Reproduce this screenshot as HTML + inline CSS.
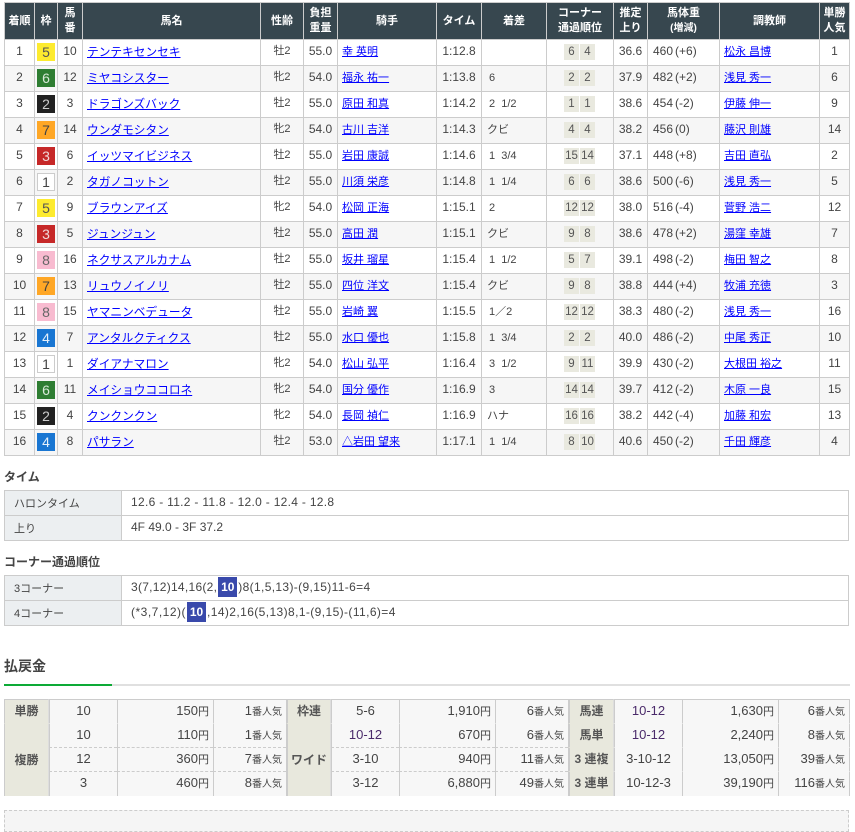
<!DOCTYPE html>
<html lang="ja"><head><meta charset="utf-8"><title>レース結果</title>
<style>
html,body{margin:0;padding:0;background:#fff}
body{width:855px;height:816px;overflow:hidden;position:relative;font:12px/16px "Liberation Sans","Noto Sans CJK JP",sans-serif;color:#444}
a{color:#00f;text-decoration:underline}
table{border-collapse:collapse;table-layout:fixed;position:absolute}
#r{left:4px;top:2px;width:845px}
#r th{background:#37474f;color:#fff;font-weight:bold;font-size:11px;line-height:15px;border:1px solid #ccc;padding:0;height:36px;text-align:center}
#r td{border:1px solid #ccc;padding:0;height:25px;text-align:center;white-space:nowrap;overflow:hidden;line-height:22px;vertical-align:top}
#r td:nth-child(5){font-size:11px}
#r tr:nth-child(even) td{background:#f6f6f6}
#r td.l{text-align:left;padding-left:4px;font-size:11.7px;line-height:25px}
#r td.j{text-align:left;padding-left:4px;font-size:11px;line-height:24px}
#r td.d{text-align:left;padding-left:7px;font-size:11px;line-height:24px}
#r td.k{text-align:left;padding-left:5px;font-size:11px;line-height:24px}
#r td.w{text-align:left;padding-left:5px}
.w i{font-style:normal;margin-left:2px}
.b{display:block;width:18px;height:18px;margin:3px auto 0;font:14px/18px "Liberation Sans",sans-serif;text-align:center;box-sizing:border-box}
.w1{background:#fff;border:1px solid #ccc;line-height:16px;color:#444}
.w2{background:#212121;color:#ccc}.w3{background:#c62828;color:#f0d8d8}.w4{background:#1976d2;color:#e6f0fa}
.w5{background:#fdeb2f;color:#555}.w6{background:#2e7d32;color:#d8e8d8}.w7{background:#ffa726;color:#444}.w8{background:#f8bbd0;color:#666}
#r td.o{text-align:left;padding-left:17px}
.c{display:inline-block;width:15px;height:16px;background:#e9e9df;font-size:11.5px;line-height:16px;margin:4px 1px 0 0;vertical-align:top;text-align:center;color:#555}
h4{position:absolute;left:4px;margin:0;font-size:12px;line-height:16px;font-weight:bold;color:#444}
.s{left:4px;width:845px}
.s td{border:1px solid #ccc;height:23px;padding:0 0 1px 9px;box-sizing:content-box;line-height:21px;white-space:nowrap;overflow:visible}
.s td:first-child{background:#eceff1;font-size:11px;line-height:21px;height:22px;padding:2px 0 0 9px}
.n{display:inline-block;width:19px;height:20px;background:#3949ab;color:#fff;font-weight:bold;text-align:center;line-height:20px;vertical-align:top;margin:0 1px -1px 1px;letter-spacing:0}
h3{position:absolute;left:4px;top:657px;margin:0;font-size:14px;line-height:18px;font-weight:bold;color:#444}
#gl{position:absolute;left:4px;top:684px;width:846px;height:2px;background:#e0e0e0}
#gl div{width:108px;height:2px;background:#0daa36}
#p{left:4px;top:699px;width:846px;border-collapse:separate;border-spacing:0;font-size:13px}
#p td{padding:0 4px;height:24px;box-sizing:border-box;background:#f7f7f7;text-align:center;white-space:nowrap;border-left:1px solid #ccc;border-top:1px solid transparent;line-height:22px;vertical-align:top;overflow:hidden}
#p tr:first-child td{border-top-color:#ccc}
#p tr:last-child td{height:25px}
#p td.h{background:#e8e8dd;font-weight:bold;font-size:12px;border-left:2px solid #ccc;border-right:1px solid #ddd;padding:0;color:#555}
#p td.h.m{vertical-align:middle;height:73px}
#p td.f{border-left-width:1px}
#p td.r{text-align:right}
#p small{font-size:10px;line-height:1}
#p small.y{font-size:11px}
#p tr.da td:not(.h){border-top:1px dashed #ccc}
#p tr.nd td:nth-last-child(-n+3){border-top-color:transparent}
#p td:last-child{border-right:1px solid #ccc}
.pu{color:#4a2a6a}
#box{position:absolute;left:4px;top:810px;width:843px;height:20px;background:#f5f5f5;border:1px dashed #ccc}
</style></head><body>
<table id="r">
<colgroup><col style="width:30px"><col style="width:23px"><col style="width:25px"><col style="width:178px"><col style="width:43px"><col style="width:34px"><col style="width:99px"><col style="width:45px"><col style="width:65px"><col style="width:67px"><col style="width:34px"><col style="width:72px"><col style="width:100px"><col style="width:30px"></colgroup>
<thead><tr><th>着順</th><th>枠</th><th>馬<br>番</th><th>馬名</th><th>性齢</th><th>負担<br>重量</th><th>騎手</th><th>タイム</th><th>着差</th><th>コーナー<br>通過順位</th><th>推定<br>上り</th><th>馬体重<br><span style="font-size:10px">(増減)</span></th><th>調教師</th><th>単勝<br>人気</th></tr></thead>
<tbody>
<tr><td>1</td><td><span class="b w5">5</span></td><td>10</td><td class="l"><a href="#">テンテキセンセキ</a></td><td>牡2</td><td>55.0</td><td class="j"><a href="#">幸 英明</a></td><td>1:12.8</td><td class="d"></td><td class="o"><span class="c">6</span><span class="c">4</span></td><td>36.6</td><td class="w">460<i>(+6)</i></td><td class="j"><a href="#">松永 昌博</a></td><td>1</td></tr>
<tr><td>2</td><td><span class="b w6">6</span></td><td>12</td><td class="l"><a href="#">ミヤコシスター</a></td><td>牝2</td><td>54.0</td><td class="j"><a href="#">福永 祐一</a></td><td>1:13.8</td><td class="d">6</td><td class="o"><span class="c">2</span><span class="c">2</span></td><td>37.9</td><td class="w">482<i>(+2)</i></td><td class="j"><a href="#">浅見 秀一</a></td><td>6</td></tr>
<tr><td>3</td><td><span class="b w2">2</span></td><td>3</td><td class="l"><a href="#">ドラゴンズバック</a></td><td>牡2</td><td>55.0</td><td class="j"><a href="#">原田 和真</a></td><td>1:14.2</td><td class="d">2&nbsp; 1/2</td><td class="o"><span class="c">1</span><span class="c">1</span></td><td>38.6</td><td class="w">454<i>(-2)</i></td><td class="j"><a href="#">伊藤 伸一</a></td><td>9</td></tr>
<tr><td>4</td><td><span class="b w7">7</span></td><td>14</td><td class="l"><a href="#">ウンダモシタン</a></td><td>牝2</td><td>54.0</td><td class="j"><a href="#">古川 吉洋</a></td><td>1:14.3</td><td class="k">クビ</td><td class="o"><span class="c">4</span><span class="c">4</span></td><td>38.2</td><td class="w">456<i>(0)</i></td><td class="j"><a href="#">藤沢 則雄</a></td><td>14</td></tr>
<tr><td>5</td><td><span class="b w3">3</span></td><td>6</td><td class="l"><a href="#">イッツマイビジネス</a></td><td>牡2</td><td>55.0</td><td class="j"><a href="#">岩田 康誠</a></td><td>1:14.6</td><td class="d">1&nbsp; 3/4</td><td class="o"><span class="c">15</span><span class="c">14</span></td><td>37.1</td><td class="w">448<i>(+8)</i></td><td class="j"><a href="#">吉田 直弘</a></td><td>2</td></tr>
<tr><td>6</td><td><span class="b w1">1</span></td><td>2</td><td class="l"><a href="#">タガノコットン</a></td><td>牡2</td><td>55.0</td><td class="j"><a href="#">川須 栄彦</a></td><td>1:14.8</td><td class="d">1&nbsp; 1/4</td><td class="o"><span class="c">6</span><span class="c">6</span></td><td>38.6</td><td class="w">500<i>(-6)</i></td><td class="j"><a href="#">浅見 秀一</a></td><td>5</td></tr>
<tr><td>7</td><td><span class="b w5">5</span></td><td>9</td><td class="l"><a href="#">ブラウンアイズ</a></td><td>牝2</td><td>54.0</td><td class="j"><a href="#">松岡 正海</a></td><td>1:15.1</td><td class="d">2</td><td class="o"><span class="c">12</span><span class="c">12</span></td><td>38.0</td><td class="w">516<i>(-4)</i></td><td class="j"><a href="#">菅野 浩二</a></td><td>12</td></tr>
<tr><td>8</td><td><span class="b w3">3</span></td><td>5</td><td class="l"><a href="#">ジュンジュン</a></td><td>牡2</td><td>55.0</td><td class="j"><a href="#">高田 潤</a></td><td>1:15.1</td><td class="k">クビ</td><td class="o"><span class="c">9</span><span class="c">8</span></td><td>38.6</td><td class="w">478<i>(+2)</i></td><td class="j"><a href="#">湯窪 幸雄</a></td><td>7</td></tr>
<tr><td>9</td><td><span class="b w8">8</span></td><td>16</td><td class="l"><a href="#">ネクサスアルカナム</a></td><td>牡2</td><td>55.0</td><td class="j"><a href="#">坂井 瑠星</a></td><td>1:15.4</td><td class="d">1&nbsp; 1/2</td><td class="o"><span class="c">5</span><span class="c">7</span></td><td>39.1</td><td class="w">498<i>(-2)</i></td><td class="j"><a href="#">梅田 智之</a></td><td>8</td></tr>
<tr><td>10</td><td><span class="b w7">7</span></td><td>13</td><td class="l"><a href="#">リュウノイノリ</a></td><td>牡2</td><td>55.0</td><td class="j"><a href="#">四位 洋文</a></td><td>1:15.4</td><td class="k">クビ</td><td class="o"><span class="c">9</span><span class="c">8</span></td><td>38.8</td><td class="w">444<i>(+4)</i></td><td class="j"><a href="#">牧浦 充徳</a></td><td>3</td></tr>
<tr><td>11</td><td><span class="b w8">8</span></td><td>15</td><td class="l"><a href="#">ヤマニンベデュータ</a></td><td>牡2</td><td>55.0</td><td class="j"><a href="#">岩崎 翼</a></td><td>1:15.5</td><td class="d">1／2</td><td class="o"><span class="c">12</span><span class="c">12</span></td><td>38.3</td><td class="w">480<i>(-2)</i></td><td class="j"><a href="#">浅見 秀一</a></td><td>16</td></tr>
<tr><td>12</td><td><span class="b w4">4</span></td><td>7</td><td class="l"><a href="#">アンタルクティクス</a></td><td>牡2</td><td>55.0</td><td class="j"><a href="#">水口 優也</a></td><td>1:15.8</td><td class="d">1&nbsp; 3/4</td><td class="o"><span class="c">2</span><span class="c">2</span></td><td>40.0</td><td class="w">486<i>(-2)</i></td><td class="j"><a href="#">中尾 秀正</a></td><td>10</td></tr>
<tr><td>13</td><td><span class="b w1">1</span></td><td>1</td><td class="l"><a href="#">ダイアナマロン</a></td><td>牝2</td><td>54.0</td><td class="j"><a href="#">松山 弘平</a></td><td>1:16.4</td><td class="d">3&nbsp; 1/2</td><td class="o"><span class="c">9</span><span class="c">11</span></td><td>39.9</td><td class="w">430<i>(-2)</i></td><td class="j"><a href="#">大根田 裕之</a></td><td>11</td></tr>
<tr><td>14</td><td><span class="b w6">6</span></td><td>11</td><td class="l"><a href="#">メイショウココロネ</a></td><td>牝2</td><td>54.0</td><td class="j"><a href="#">国分 優作</a></td><td>1:16.9</td><td class="d">3</td><td class="o"><span class="c">14</span><span class="c">14</span></td><td>39.7</td><td class="w">412<i>(-2)</i></td><td class="j"><a href="#">木原 一良</a></td><td>15</td></tr>
<tr><td>15</td><td><span class="b w2">2</span></td><td>4</td><td class="l"><a href="#">クンクンクン</a></td><td>牝2</td><td>54.0</td><td class="j"><a href="#">長岡 禎仁</a></td><td>1:16.9</td><td class="k">ハナ</td><td class="o"><span class="c">16</span><span class="c">16</span></td><td>38.2</td><td class="w">442<i>(-4)</i></td><td class="j"><a href="#">加藤 和宏</a></td><td>13</td></tr>
<tr><td>16</td><td><span class="b w4">4</span></td><td>8</td><td class="l"><a href="#">パサラン</a></td><td>牡2</td><td>53.0</td><td class="j"><a href="#">△岩田 望来</a></td><td>1:17.1</td><td class="d">1&nbsp; 1/4</td><td class="o"><span class="c">8</span><span class="c">10</span></td><td>40.6</td><td class="w">450<i>(-2)</i></td><td class="j"><a href="#">千田 輝彦</a></td><td>4</td></tr>
</tbody></table>

<h4 style="top:469px">タイム</h4>
<table class="s" style="top:490px"><colgroup><col style="width:117px"><col></colgroup>
<tr><td>ハロンタイム</td><td style="letter-spacing:.3px">12.6 - 11.2 - 11.8 - 12.0 - 12.4 - 12.8</td></tr>
<tr><td>上り</td><td>4F 49.0 - 3F 37.2</td></tr></table>

<h4 style="top:554px">コーナー通過順位</h4>
<table class="s" style="top:575px"><colgroup><col style="width:117px"><col></colgroup>
<tr><td>3コーナー</td><td style="letter-spacing:.35px"><span style="letter-spacing:.28px">3(7,12)14,16(2,</span><span class="n">10</span>)8(1,5,13)-(9,15)11-6=4</td></tr>
<tr><td>4コーナー</td><td style="letter-spacing:.4px"><span style="letter-spacing:.5px">(*3,7,12)(</span><span class="n">10</span>,14)2,16(5,13)8,1-(9,15)-(11,6)=4</td></tr></table>

<h3>払戻金</h3>
<div id="gl"><div></div></div>

<table id="p"><colgroup><col style="width:45px"><col style="width:68px"><col style="width:96px"><col style="width:73px"><col style="width:45px"><col style="width:68px"><col style="width:96px"><col style="width:73px"><col style="width:46px"><col style="width:68px"><col style="width:96px"><col style="width:72px"></colgroup>
<tr><td class="h f">単勝</td><td>10</td><td class="r">150<small class="y">円</small></td><td class="r">1<small>番人気</small></td><td class="h">枠連</td><td>5-6</td><td class="r">1,910<small class="y">円</small></td><td class="r">6<small>番人気</small></td><td class="h">馬連</td><td class="pu">10-12</td><td class="r">1,630<small class="y">円</small></td><td class="r">6<small>番人気</small></td></tr>
<tr><td class="h f m" rowspan="3">複勝</td><td>10</td><td class="r">110<small class="y">円</small></td><td class="r">1<small>番人気</small></td><td class="h m" rowspan="3">ワイド</td><td class="pu">10-12</td><td class="r">670<small class="y">円</small></td><td class="r">6<small>番人気</small></td><td class="h">馬単</td><td class="pu">10-12</td><td class="r">2,240<small class="y">円</small></td><td class="r">8<small>番人気</small></td></tr>
<tr class="da nd"><td>12</td><td class="r">360<small class="y">円</small></td><td class="r">7<small>番人気</small></td><td>3-10</td><td class="r">940<small class="y">円</small></td><td class="r">11<small>番人気</small></td><td class="h">3 連複</td><td>3-10-12</td><td class="r">13,050<small class="y">円</small></td><td class="r">39<small>番人気</small></td></tr>
<tr class="da nd"><td>3</td><td class="r">460<small class="y">円</small></td><td class="r">8<small>番人気</small></td><td>3-12</td><td class="r">6,880<small class="y">円</small></td><td class="r">49<small>番人気</small></td><td class="h">3 連単</td><td>10-12-3</td><td class="r">39,190<small class="y">円</small></td><td class="r">116<small>番人気</small></td></tr>
</table>
<div id="box"></div>
</body></html>
